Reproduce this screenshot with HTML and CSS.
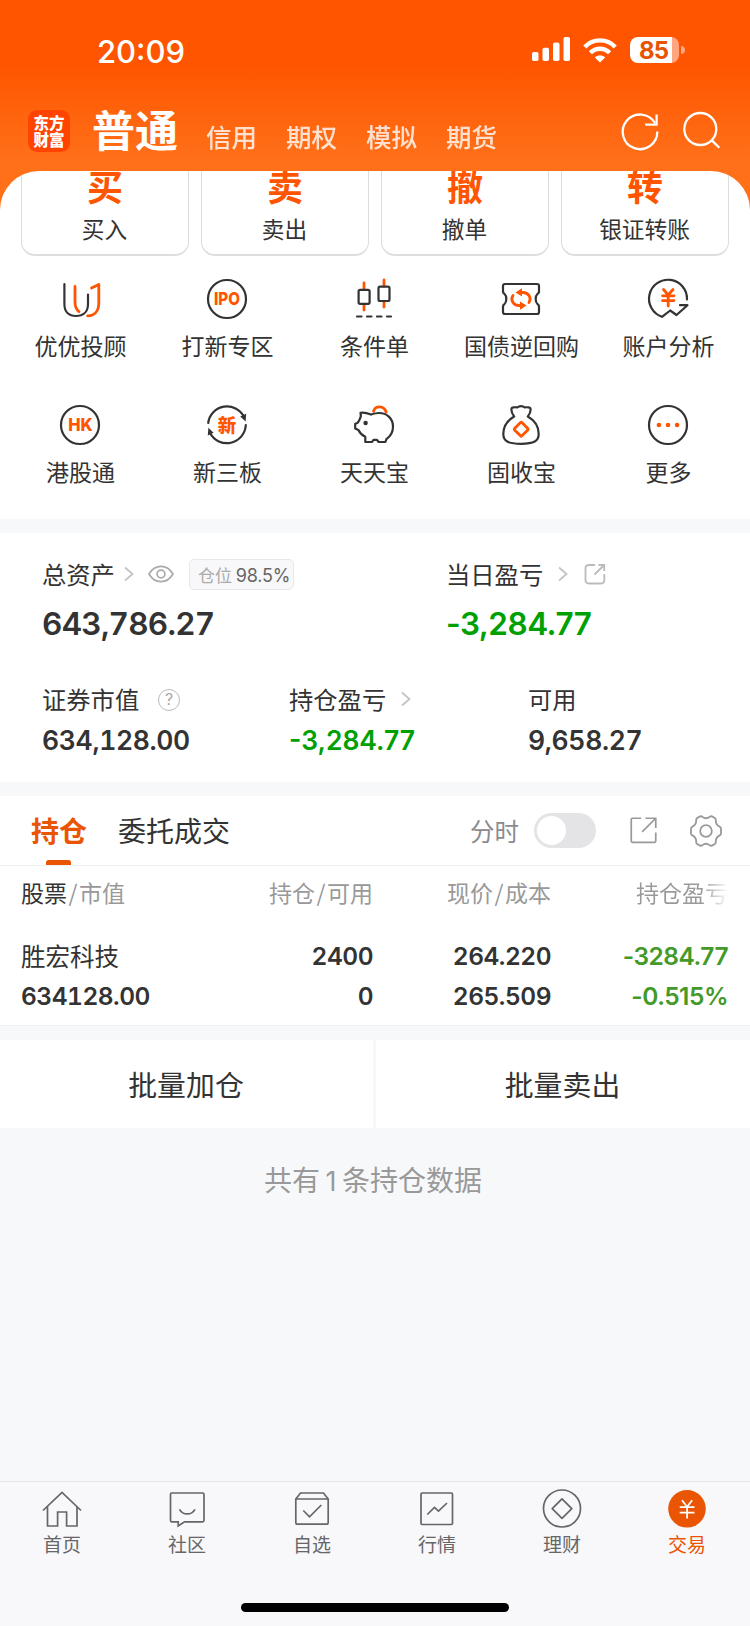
FILE: index.html
```html
<!DOCTYPE html>
<html lang="zh-CN">
<head>
    <meta charset="UTF-8">
    <meta name="viewport" content="width=device-width, initial-scale=1.0">
    <title>交易</title>
    <link rel="stylesheet" href="styles.css">
</head>
<body>

    <div class="top">
        <!-- 状态栏 -->
        <div class="status-bar">
            <span class="time">20:09</span>
            <div class="status-icons">
                <svg class="signal" viewBox="0 0 38 24" fill="#fff">
                    <rect x="0" y="15" width="6.5" height="9" rx="1.8"/>
                    <rect x="10.5" y="10.8" width="6.5" height="13.2" rx="1.8"/>
                    <rect x="21" y="5.4" width="6.5" height="18.6" rx="1.8"/>
                    <rect x="31.5" y="0" width="6.5" height="24" rx="1.8"/>
                </svg>
                <svg class="wifi" viewBox="0 0 34 25" fill="none" stroke="#fff" stroke-width="4.4">
                    <path d="M1.8 9 C10 0.2 24 0.2 32.2 9"/>
                    <path d="M7.4 14.8 C12.6 9.3 21.4 9.3 26.6 14.8"/>
                    <path d="M17 24.6 L11.8 19.4 C14.6 16.8 19.4 16.8 22.2 19.4 Z" fill="#fff" stroke="none"/>
                </svg>
                <div class="battery"><span>85</span></div>
            </div>
        </div>

        <!-- 顶部导航 -->
        <div class="nav">
            <div class="logo">东方<br>财富</div>
            <div class="nav-title">普通</div>
            <div class="nav-tabs">
                <span>信用</span>
                <span>期权</span>
                <span>模拟</span>
                <span>期货</span>
            </div>
            <svg class="nav-icon refresh" viewBox="0 0 40 40" fill="none" stroke="#fff" stroke-width="2.3">
                <path d="M37.3 20.5 A17.3 17.3 0 1 1 35 12.2"/>
                <path d="M36.6 3.5 V13.6 H25.2"/>
            </svg>
            <svg class="nav-icon" viewBox="0 0 40 40" fill="none" stroke="#fff" stroke-width="2.3">
                <circle cx="18.3" cy="18" r="16"/>
                <path d="M29.8 29.4 L37.3 36.8"/>
            </svg>
        </div>

        <div class="sheet">
            <div class="cards">
                <div class="card"><b>买</b><span>买入</span></div>
                <div class="card"><b>卖</b><span>卖出</span></div>
                <div class="card"><b>撤</b><span>撤单</span></div>
                <div class="card"><b>转</b><span>银证转账</span></div>
            </div>

            <!-- 功能入口 -->
            <div class="menu">
                <div class="menu-item">
                    <svg viewBox="0 0 40 40" class="ico">
                        <path d="M4.4 5 V25 C4.4 33 9 37 16 37 C23 37 28 33 28 25 V15.5"/>
                        <path class="hot" d="M15 7.5 V23 C15 28 16.5 30.8 19 32.6"/>
                        <path class="hot" d="M31.5 9 L38.8 5.4 V24 C38.8 32 34.5 36.8 27.6 36.8"/>
                    </svg>
                    <span>优优投顾</span>
                </div>
                <div class="menu-item">
                    <svg viewBox="0 0 40 40" class="ico">
                        <circle cx="20" cy="20" r="19"/>
                        <text x="20" y="26.3" textLength="26" lengthAdjust="spacingAndGlyphs">IPO</text>
                    </svg>
                    <span>打新专区</span>
                </div>
                <div class="menu-item">
                    <svg viewBox="0 0 40 40" class="ico">
                        <path class="hot" d="M10 4 V10 M10 26 V31 M30 1 V7 M30 23 V28"/>
                        <rect x="4.6" y="10.8" width="11" height="14" rx="1.5"/>
                        <rect x="24.5" y="7.6" width="11" height="14.4" rx="1.5"/>
                        <path d="M3 37.5 H7.5 M13 37.5 H17.5 M23 37.5 H27.5 M33 37.5 H37"/>
                    </svg>
                    <span>条件单</span>
                </div>
                <div class="menu-item">
                    <svg viewBox="0 0 40 40" class="ico">
                        <path d="M4 5 H36 Q38 5 38 7 V12.5 Q38 14 36.6 14.8 Q34.7 16.5 34.7 20 Q34.7 23.5 36.6 25.2 Q38 26 38 27.5 V33 Q38 35 36 35 H4 Q2 35 2 33 V27.5 Q2 26 3.4 25.2 Q5.3 23.5 5.3 20 Q5.3 16.5 3.4 14.8 Q2 14 2 12.5 V7 Q2 5 4 5 Z"/>
                        <path class="hot" d="M12 16.5 C9 21 12.5 26.5 18 26.5 H21 M28 23.5 C31 19 27.5 13.5 22 13.5 H19"/>
                        <path class="hot-fill" d="M14.5 13.5 L21 9.3 V17.5 Z M25.5 26.5 L19 22.5 V30.7 Z"/>
                    </svg>
                    <span>国债逆回购</span>
                </div>
                <div class="menu-item">
                    <svg viewBox="0 0 40 40" class="ico">
                        <path d="M39 20.5 A19 19 0 1 0 14 37.8 L22.2 31.5 L28.5 36 L39.5 26.2 H32"/>
                        <path class="hot" d="M15.5 10.5 L20.2 16 L25 10.5 M14.5 16.8 H26 M14.5 21.6 H26 M20.2 16.5 V27"/>
                    </svg>
                    <span>账户分析</span>
                </div>
                <div class="menu-item">
                    <svg viewBox="0 0 40 40" class="ico">
                        <circle cx="20" cy="20" r="19"/>
                        <text x="20.5" y="26.3" textLength="24.5" lengthAdjust="spacingAndGlyphs">HK</text>
                    </svg>
                    <span>港股通</span>
                </div>
                <div class="menu-item">
                    <svg viewBox="0 0 40 40" class="ico">
                        <path d="M1.2 18 A19 19 0 0 1 37 11.8 M38.8 20 A19 19 0 0 1 3 28"/>
                        <path class="dark-fill" d="M33.2 11.6 L39.2 8.8 L38.6 16.6 Z M6.6 27.8 L0.8 30.6 L1.4 22.8 Z"/>
                        <text x="20" y="27" class="cjk">新</text>
                    </svg>
                    <span>新三板</span>
                </div>
                <div class="menu-item">
                    <svg viewBox="0 0 40 40" class="ico">
                        <path class="hot" d="M19.5 6.2 C21.5 0.4 30 0.4 32.2 7.2"/>
                        <path d="M17 9.5 C13 8 9.5 7.5 6.5 7.8 C7.3 10 7 12 5.6 14.5 C4.8 16 4.2 17.2 3.4 18 L1.2 18.8 V23.5 L4.4 25 C6 28.3 8 30.3 11.3 31.8 V37 H18 L19.5 34.8 H23 L24.6 37 H31.4 L32.4 34.2 C37 31 39 26 39 21.8 C39 13 32.5 8 25 8 C22 8 19.5 8.6 17 9.5"/>
                        <circle class="dark-fill" cx="11.6" cy="18" r="2.2"/>
                    </svg>
                    <span>天天宝</span>
                </div>
                <div class="menu-item">
                    <svg viewBox="0 0 40 40" class="ico">
                        <path d="M13.2 11.5 C7 15 2.3 20.5 2.3 29 C2.3 36 7 38.8 20 38.8 C33 38.8 37.7 36 37.7 29 C37.7 20.5 33 15 26.8 11.5 C28.5 9.5 29.8 7 29.6 4 C29.4 1.8 25.5 2.2 23.4 2.4 C22 0.6 18 0.6 16.6 2.4 C14.5 2.2 10.6 1.8 10.4 4 C10.2 7 11.5 9.5 13.2 11.5 Z"/>
                        <rect class="hot" x="15" y="19" width="10.4" height="10.4" rx="1" transform="rotate(45 20.2 24.2)"/>
                    </svg>
                    <span>固收宝</span>
                </div>
                <div class="menu-item">
                    <svg viewBox="0 0 40 40" class="ico">
                        <circle cx="20" cy="20" r="19"/>
                        <path class="hot-fill" d="M8.6 20 a2.3 2.3 0 1 0 4.6 0 a2.3 2.3 0 1 0 -4.6 0 M17.7 20 a2.3 2.3 0 1 0 4.6 0 a2.3 2.3 0 1 0 -4.6 0 M26.8 20 a2.3 2.3 0 1 0 4.6 0 a2.3 2.3 0 1 0 -4.6 0"/>
                    </svg>
                    <span>更多</span>
                </div>
            </div>
        </div>
    </div>

    <!-- 资产 -->
    <div class="assets">
        <div class="asset-row main">
            <div class="asset">
                <div class="label">
                    总资产
                    <svg class="chevron near" viewBox="0 0 10 16"><path d="M1 1.5 L8.5 8 L1 14.5"/></svg>
                    <svg class="eye" viewBox="0 0 26 18" fill="none" stroke="#aaa" stroke-width="1.7">
                        <path d="M1 9 C7 -1.2 19 -1.2 25 9 C19 19.2 7 19.2 1 9 Z"/>
                        <circle cx="13" cy="9" r="3.9"/>
                    </svg>
                    <span class="badge">仓位 <i>98.5%</i></span>
                </div>
                <div class="value">643,786.27</div>
            </div>
            <div class="asset">
                <div class="label">
                    当日盈亏
                    <svg class="chevron" viewBox="0 0 10 16"><path d="M1 1.5 L8.5 8 L1 14.5"/></svg>
                    <svg class="share" viewBox="0 0 22 22" fill="none" stroke="#bbb" stroke-width="1.8">
                        <path d="M11 2 H5 Q1.5 2 1.5 5 V17 Q1.5 20.5 5 20.5 H17 Q20.3 20.5 20.3 17 V11"/>
                        <path d="M14.5 2 H20.2 V8 M20.2 2 L10.5 11.5"/>
                    </svg>
                </div>
                <div class="value down">-3,284.77</div>
            </div>
        </div>
        <div class="asset-row sub">
            <div class="asset">
                <div class="label">
                    证券市值
                    <span class="help">?</span>
                </div>
                <div class="value">634,128.00</div>
            </div>
            <div class="asset">
                <div class="label">
                    持仓盈亏
                    <svg class="chevron" viewBox="0 0 10 16"><path d="M1 1.5 L8.5 8 L1 14.5"/></svg>
                </div>
                <div class="value down">-3,284.77</div>
            </div>
            <div class="asset">
                <div class="label">可用</div>
                <div class="value">9,658.27</div>
            </div>
        </div>
    </div>

    <!-- 持仓 -->
    <div class="holdings">
        <div class="tabs">
            <span class="tab active">持仓</span>
            <span class="tab">委托成交</span>
            <span class="switch-label">分时</span>
            <span class="switch"></span>
            <svg class="export" viewBox="0 0 28 28" fill="none" stroke="#999" stroke-width="1.8">
                <path d="M11.5 1.3 H2.5 Q1.3 1.3 1.3 2.5 V25 Q1.3 26.2 2.5 26.2 H25.5 Q26.7 26.2 26.7 25 V16"/>
                <path d="M16 1.3 H26.7 V11.5 M26.7 1.3 L12.6 15.4"/>
            </svg>
            <svg class="gear" viewBox="0 0 32 32" fill="none" stroke="#999" stroke-width="1.8">
                <circle cx="16" cy="16" r="5.8"/>
                <path d="M10 1.4 Q11.4 0.9 12.4 1.9 Q16 4.6 19.6 1.9 Q20.6 0.9 22 1.4 L24.8 3 Q26 3.8 25.8 5.4 Q25.8 9.8 29.6 11.6 Q31 12.2 31 13.6 V18.4 Q31 19.8 29.6 20.4 Q25.8 22.2 25.8 26.6 Q26 28.2 24.8 29 L22 30.6 Q20.6 31.1 19.6 30.1 Q16 27.4 12.4 30.1 Q11.4 31.1 10 30.6 L7.2 29 Q6 28.2 6.2 26.6 Q6.2 22.2 2.4 20.4 Q1 19.8 1 18.4 V13.6 Q1 12.2 2.4 11.6 Q6.2 9.8 6.2 5.4 Q6 3.8 7.2 3 Z"/>
            </svg>
        </div>
        <div class="table-row table-head">
            <span><em>股票</em><u>/</u>市值</span>
            <span>持仓<u>/</u>可用</span>
            <span>现价<u>/</u>成本</span>
            <span class="fade">持仓盈亏</span>
        </div>
        <div class="table-row first-line">
            <span class="stock">胜宏科技</span>
            <span>2400</span>
            <span>264.220</span>
            <span class="green">-3284.77</span>
        </div>
        <div class="table-row second-line">
            <span>634128.00</span>
            <span>0</span>
            <span>265.509</span>
            <span class="green">-0.515%</span>
        </div>
    </div>

    <div class="actions">
        <div class="action">批量加仓</div>
        <div class="action">批量卖出</div>
    </div>

    <div class="summary">共有<i>1</i>条持仓数据</div>

    <!-- 底部标签栏 -->
    <div class="tab-bar">
        <div class="bar-items">
            <div class="bar-item">
                <svg viewBox="0 0 40 40">
                    <path d="M1 20.5 L20 2.4 L39 20.5 M5.5 16.5 V36 H15.6 V22 H24.6 V36 H35 V16.5"/>
                </svg>
                <span>首页</span>
            </div>
            <div class="bar-item">
                <svg viewBox="0 0 40 40">
                    <path d="M4.5 3 H35.5 Q37 3 37 4.5 V30.3 Q37 31.8 35.5 31.8 H17.5 L11.2 36 V31.8 H4.5 Q3.5 31.8 3.5 30.3 V4.5 Q3.5 3 4.5 3 Z M12.5 19.3 C16 25.5 24.5 25.5 28 19.3"/>
                </svg>
                <span>社区</span>
            </div>
            <div class="bar-item">
                <svg viewBox="0 0 40 40">
                    <path d="M3.8 9 L8.5 3 H31.5 L36.2 9 V32.5 Q36.2 34.2 34.6 34.2 H5.4 Q3.8 34.2 3.8 32.5 Z M3.8 9 H36.2 M11.3 20.5 L17.5 26.8 L29.3 15"/>
                </svg>
                <span>自选</span>
            </div>
            <div class="bar-item">
                <svg viewBox="0 0 40 40">
                    <rect x="4" y="3" width="31.5" height="31.5" rx="1.2"/>
                    <path d="M10.3 24.5 L17.5 17.5 L21.5 21.2 L30 13"/>
                </svg>
                <span>行情</span>
            </div>
            <div class="bar-item">
                <svg viewBox="0 0 40 40">
                    <circle cx="20" cy="18.5" r="18.5"/>
                    <path d="M20 8.8 L29.8 18.6 L20 28.4 L10.2 18.6 Z" stroke-linejoin="round"/>
                </svg>
                <span>理财</span>
            </div>
            <div class="bar-item active">
                <svg viewBox="0 0 40 40">
                    <circle cx="20" cy="18.8" r="18.8"/>
                    <path d="M15 10.3 L20 16.8 L25.2 10.3 M12.7 17.2 H27.5 M12.7 22.6 H27.5 M20.1 17 V28.5"/>
                </svg>
                <span>交易</span>
            </div>
        </div>
        <div class="home-indicator"></div>
    </div>

</body>
</html>
```
FILE: styles.css
```css
/* 基本样式 */
* {
    box-sizing: border-box;
}

body {
    margin: 0;
    width: 750px;
    height: 1626px;
    display: flex;
    flex-direction: column;
    overflow: hidden;
    background: #f7f8fa;
    color: #333;
    font-family: "Noto Sans CJK SC", sans-serif;
}

i, em, u {
    font-style: normal;
    text-decoration: none;
}

svg {
    display: block;
    flex: none;
    overflow: visible;
}

/* 顶部 */
.top {
    height: 519px;
    background: linear-gradient(#ff5500 65px, #ff7019 160px);
}

.status-bar {
    height: 100px;
    padding: 0 65px 0 97px;
    display: flex;
    justify-content: space-between;
    align-items: center;
    color: #fff;
    font-family: Inter, sans-serif;
}

.time {
    font-size: 31px;
    font-weight: 500;
    line-height: 40px;
    margin-top: 3px;
}

.status-icons {
    display: flex;
    align-items: center;
    gap: 13px;
}

.signal {
    width: 38px;
    height: 24px;
    margin-top: -2px;
}

.wifi {
    width: 34px;
    height: 25px;
}

.battery {
    position: relative;
    width: 49px;
    height: 26px;
    margin: 0 6px 0 0;
    border-radius: 8px;
    background: linear-gradient(90deg, #fff 42px, #ffa680 42px);
    color: #e85300;
    font-size: 24px;
    font-weight: 700;
    line-height: 27px;
    padding-left: 9px;
    letter-spacing: -0.8px;
}

.battery::after {
    content: "";
    position: absolute;
    right: -6px;
    top: 9px;
    width: 4px;
    height: 8px;
    border-radius: 0 4px 4px 0;
    background: #ffa680;
}

.nav {
    height: 71px;
    padding: 0 28px;
    display: flex;
    align-items: center;
    color: #fff;
}

.logo {
    width: 42px;
    height: 42px;
    margin-top: -9px;
    border-radius: 9px;
    background: #ff4400;
    font-size: 15.5px;
    font-weight: 900;
    line-height: 17px;
    text-align: center;
    padding-top: 4px;
}

.nav-title {
    margin: -15px 0 0 22px;
    font-size: 43px;
    font-weight: 700;
    line-height: 50px;
}

.nav-tabs {
    display: flex;
    gap: 29px;
    margin: 1px auto 0 28px;
    font-size: 25.5px;
    font-weight: 500;
    line-height: 36px;
    opacity: 0.8;
}

.nav-icon {
    width: 40px;
    height: 40px;
    margin-top: -9px;
}

.refresh {
    margin-right: 22px;
}

.sheet {
    height: 348px;
    overflow: hidden;
    border-radius: 39px 39px 0 0;
    background: #fff;
}

.cards {
    display: grid;
    grid-template-columns: repeat(4, 168px);
    gap: 12px;
    margin-top: -40px;
    padding-left: 21px;
}

.card {
    height: 125px;
    border: 1px solid #ddd;
    border-bottom-width: 2px;
    border-radius: 14px;
    display: flex;
    flex-direction: column;
    align-items: center;
}

.card b {
    margin-top: 31px;
    font-size: 36px;
    line-height: 44px;
    color: #ff5500;
}

.card span {
    margin: 5px 1px 0 0;
    font-size: 22.7px;
    line-height: 34px;
}

.menu {
    display: grid;
    grid-template-columns: repeat(5, 147px);
    grid-auto-rows: 125.5px;
    padding: 23px 0 0 7px;
}

.menu-item {
    display: flex;
    flex-direction: column;
    align-items: center;
    font-size: 23px;
    line-height: 34px;
}

.menu-item span {
    margin-top: 9px;
}

.ico {
    width: 40px;
    height: 40px;
    margin-right: 1px;
    fill: none;
    stroke: #333;
    stroke-width: 2.2;
    stroke-linecap: round;
    stroke-linejoin: round;
}

.ico .hot {
    stroke: #ff5500;
    stroke-width: 2.8;
}

.ico .hot-fill {
    fill: #ff5500;
    stroke: none;
}

.ico .dark-fill {
    fill: #333;
    stroke: none;
}

.ico text {
    fill: #ff5500;
    stroke: none;
    font-family: Inter, sans-serif;
    font-size: 17.5px;
    font-weight: 800;
    text-anchor: middle;
}

.ico .cjk {
    font-family: "Noto Sans CJK SC", sans-serif;
    font-size: 18.5px;
    font-weight: 900;
}

/* 资产 */
.assets {
    height: 249px;
    margin-top: 14px;
    padding: 23px 0 0 42px;
    background: #fff;
}

.asset-row {
    display: grid;
}

.main {
    grid-template-columns: 404px 1fr;
    height: 125px;
}

.sub {
    grid-template-columns: 247px 239px 1fr;
}

.label {
    display: flex;
    align-items: center;
    height: 36px;
    font-size: 24.3px;
    line-height: 34px;
}

.value {
    font-family: Inter, sans-serif;
    font-weight: 600;
    font-variant-numeric: tabular-nums;
}

.main .value {
    margin-top: 12px;
    font-size: 31.5px;
    line-height: 40px;
    letter-spacing: -0.75px;
}

.sub .value {
    margin-top: 5px;
    font-size: 26.5px;
    line-height: 36px;
    letter-spacing: -0.35px;
}

.value.down {
    color: #00a000;
    font-variant-numeric: normal;
}

.main .down {
    letter-spacing: -0.5px;
}

.sub .down {
    letter-spacing: 0;
}

.chevron {
    width: 10px;
    height: 16px;
    margin-left: 15px;
    fill: none;
    stroke: #c4c4c4;
    stroke-width: 1.8;
}

.near {
    margin-left: 9px;
}

.eye {
    width: 26px;
    height: 18px;
    margin-left: 14px;
}

.badge {
    height: 31px;
    margin-left: 15px;
    padding: 0 3px 0 8px;
    border: 1px solid #e8e8ea;
    border-radius: 5px;
    background: #f8f8fa;
    color: #aaa;
    font-size: 17px;
    line-height: 29px;
}

.badge i {
    font-family: Inter, sans-serif;
    font-size: 18px;
    letter-spacing: -0.2px;
    color: #666;
}

.share {
    width: 22px;
    height: 22px;
    margin-left: 16px;
}

.help {
    width: 22px;
    height: 22px;
    margin: 2px 0 0 19px;
    border: 1.5px solid #bbb;
    border-radius: 50%;
    color: #aaa;
    font-family: Inter, sans-serif;
    font-size: 16px;
    line-height: 19px;
    text-align: center;
}

/* 持仓 */
.holdings {
    height: 230px;
    margin-top: 14px;
    background: #fff;
    border-bottom: 1px solid #f0f1f3;
}

.tabs {
    height: 70px;
    padding: 0 28px 0 31px;
    display: flex;
    align-items: center;
    border-bottom: 1px solid #f0f1f3;
    font-size: 28px;
    line-height: 69px;
}

.tab {
    position: relative;
    margin-right: 31px;
}

.active {
    color: #ea5504;
}

.tab.active {
    font-weight: 700;
}

.tab.active::after {
    content: "";
    position: absolute;
    left: 15px;
    bottom: 0;
    width: 25px;
    height: 5px;
    border-radius: 2.5px 2.5px 0 0;
    background: #ea5504;
}

.switch-label {
    margin-left: auto;
    color: #8a8a90;
    font-size: 24.5px;
}

.switch {
    width: 62px;
    height: 35px;
    margin: 0 34px 0 15px;
    padding: 3px;
    border-radius: 18px;
    background: #e4e4e6;
}

.switch::before {
    content: "";
    display: block;
    width: 29px;
    height: 29px;
    border-radius: 50%;
    background: #fff;
}

.export {
    width: 27px;
    height: 27px;
    margin-right: 33px;
}

.gear {
    width: 32px;
    height: 32px;
}

.table-row {
    display: grid;
    grid-template-columns: 180px 172px 178px 177px;
    padding-left: 21px;
    text-align: right;
    font-family: Inter, sans-serif;
    font-size: 24.5px;
    font-weight: 600;
    font-variant-numeric: tabular-nums;
    letter-spacing: -0.5px;
    line-height: 40px;
}

.table-row span:first-child {
    text-align: left;
}

.table-head {
    padding-top: 6px;
    font-family: "Noto Sans CJK SC", sans-serif;
    font-size: 23px;
    font-weight: 400;
    letter-spacing: 0;
    color: #999;
}

.table-head em {
    color: #333;
}

.table-head u {
    padding: 0 1.5px;
}

.fade {
    background: linear-gradient(90deg, #999 150px, #fff 178px);
    background-clip: text;
    color: transparent;
}

.first-line {
    padding-top: 24px;
}

.stock {
    font-family: "Noto Sans CJK SC", sans-serif;
    font-weight: 400;
    letter-spacing: 0;
}

.green {
    color: #439a29;
    font-variant-numeric: normal;
}

.actions {
    display: grid;
    grid-template-columns: 373px 374px;
    gap: 3px;
    margin-top: 14px;
}

.action {
    height: 88px;
    background: #fff;
    padding-right: 1px;
    font-size: 28.9px;
    line-height: 87px;
    text-align: center;
}

.summary {
    margin: 29px 4px 0 0;
    font-size: 28px;
    line-height: 44px;
    text-align: center;
    color: #999;
}

.summary i {
    padding: 0 5.5px;
    font-family: Inter, sans-serif;
    font-size: 27px;
}

/* 底部标签栏 */
.tab-bar {
    height: 145px;
    margin-top: auto;
    border-top: 1px solid #e3e4e6;
    background: #f8f8fb;
}

.bar-items {
    display: grid;
    grid-template-columns: repeat(6, 125px);
    padding-top: 8px;
}

.bar-item {
    display: flex;
    flex-direction: column;
    align-items: center;
    padding-right: 1px;
    font-size: 19px;
    line-height: 28px;
    color: #666;
}

.bar-item svg {
    width: 40px;
    height: 40px;
    fill: none;
    stroke: #666;
    stroke-width: 1.7;
}

.bar-item.active {
    color: #ea5504;
}

.bar-item.active circle {
    fill: #ea5504;
    stroke: none;
}

.bar-item.active path {
    stroke: #fff;
    stroke-width: 1.8;
}

.home-indicator {
    width: 268px;
    height: 9px;
    margin: 45px auto 0;
    border-radius: 5px;
    background: #000;
}
```
